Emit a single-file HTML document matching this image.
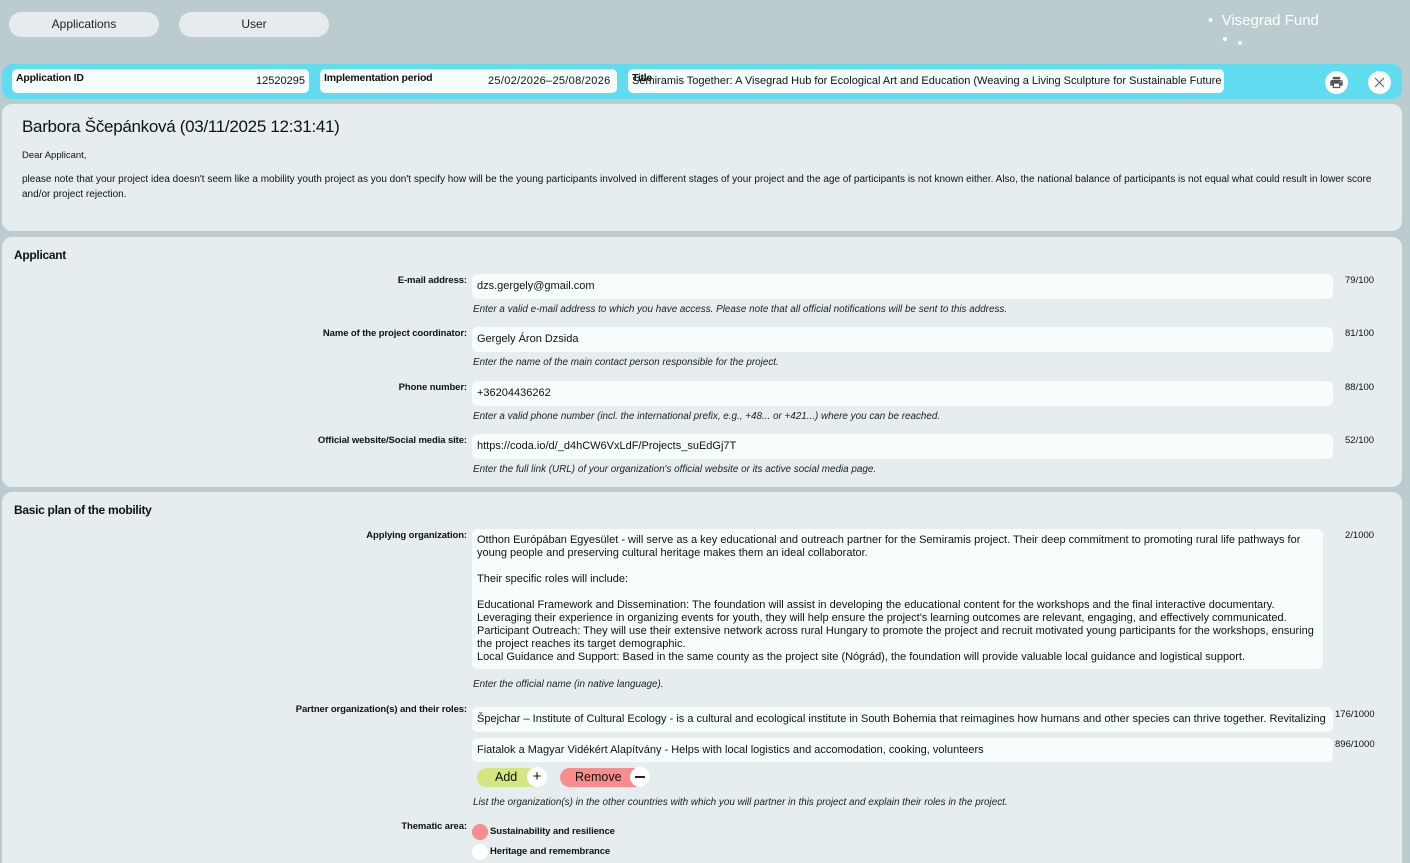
<!DOCTYPE html>
<html style="overflow:hidden"><head><meta charset="utf-8"><style>
*{box-sizing:border-box;margin:0;padding:0}
html,body{width:1410px;height:863px;overflow:hidden}
body{background:#bccbce;font-family:"Liberation Sans",sans-serif;color:#111;position:relative}
.a{position:absolute;white-space:nowrap}
.nav{background:#e6eced;border-radius:13px;height:25px;width:150px;top:12px;font-size:12px;text-align:center;line-height:25px;color:#222}
.panel{position:absolute;left:2px;width:1400px;background:#e6edee;border-radius:10px}
.fld{position:absolute;background:#f7fdfd;border-radius:5px}
.lbl{position:absolute;right:943px;font-size:9.5px;font-weight:bold;letter-spacing:-0.1px;white-space:nowrap}
.inp{position:absolute;left:472px;width:861px;height:25px;background:#f7fdfd;border-radius:6px;font-size:11px;padding:0 5px;line-height:25px;white-space:nowrap;overflow:hidden}
.hint{position:absolute;left:473px;font-size:9.9px;font-style:italic;white-space:nowrap;color:#222}
.cnt{position:absolute;left:1345px;font-size:9.5px;white-space:nowrap}
.ta{font-size:11px;line-height:13px}
</style></head><body>
<div class="a nav" style="left:9px">Applications</div>
<div class="a nav" style="left:179px">User</div>
<div class="a" style="left:1208px;top:12px;color:#fff;font-size:15px">•&nbsp;&nbsp;Visegrad Fund</div>
<div class="a" style="left:1223px;top:37px;width:4px;height:4px;border-radius:50%;background:#fff"></div>
<div class="a" style="left:1238px;top:41px;width:4px;height:4px;border-radius:50%;background:#fff"></div>

<div class="a" style="left:2px;top:64px;width:1400px;height:35px;background:#5fdcef;border-radius:10px"></div>
<div class="fld" style="left:12px;top:69px;width:297px;height:24px"></div>
<div class="a" style="left:16px;top:72px;font-size:10.5px;font-weight:bold;letter-spacing:-0.2px">Application ID</div>
<div class="a" style="left:256px;top:75px;font-size:11px">12520295</div>
<div class="fld" style="left:320px;top:69px;width:297px;height:24px"></div>
<div class="a" style="left:324px;top:72px;font-size:10.5px;font-weight:bold;letter-spacing:-0.2px">Implementation period</div>
<div class="a" style="left:488px;top:75px;font-size:11px;letter-spacing:0.3px">25/02/2026–25/08/2026</div>
<div class="fld" style="left:628px;top:69px;width:596px;height:24px"></div>
<div class="a" style="left:632px;top:72px;font-size:10.5px;font-weight:bold;letter-spacing:-0.3px">Title</div>
<div class="a" style="left:632px;top:75px;font-size:11px">Semiramis Together: A Visegrad Hub for Ecological Art and Education (Weaving a Living Sculpture for Sustainable Future</div>
<div class="a" style="left:1325px;top:71px;width:23px;height:23px;border-radius:50%;background:#fff"></div>
<svg class="a" style="left:1329px;top:75px" width="15" height="15" viewBox="0 0 24 24"><path fill="#555" d="M19 8H5c-1.66 0-3 1.34-3 3v6h4v4h12v-4h4v-6c0-1.66-1.34-3-3-3zm-3 11H8v-5h8v5zm3-7c-.55 0-1-.45-1-1s.45-1 1-1 1 .45 1 1-.45 1-1 1zm-1-9H6v4h12V3z"/></svg>
<div class="a" style="left:1368px;top:71px;width:23px;height:23px;border-radius:50%;background:#fff"></div>
<svg class="a" style="left:1374px;top:77px" width="11" height="11" viewBox="0 0 11 11"><path d="M1 1L10 10M10 1L1 10" stroke="#666" stroke-width="1.2"/></svg>

<div class="panel" style="top:104px;height:127px"></div>
<div class="a" style="left:22px;top:117px;font-size:17px;letter-spacing:-0.3px">Barbora Ščepánková (03/11/2025 12:31:41)</div>
<div class="a" style="left:22px;top:150px;font-size:9.5px">Dear Applicant,</div>
<div class="a" style="left:22px;top:174px;font-size:10px">please note that your project idea doesn't seem like a mobility youth project as you don't specify how will be the young participants involved in different stages of your project and the age of participants is not known either. Also, the national balance of participants is not equal what could result in lower score</div>
<div class="a" style="left:22px;top:189px;font-size:10px">and/or project rejection.</div>

<div class="panel" style="top:237px;height:250px"></div>
<div class="a" style="left:14px;top:248px;font-size:12px;font-weight:bold;letter-spacing:-0.3px">Applicant</div>
<div class="lbl" style="top:275px">E-mail address:</div>
<div class="inp" style="top:274px">dzs.gergely@gmail.com</div>
<div class="hint" style="top:304px">Enter a valid e-mail address to which you have access. Please note that all official notifications will be sent to this address.</div>
<div class="cnt" style="top:275px">79/100</div>
<div class="lbl" style="top:328px">Name of the project coordinator:</div>
<div class="inp" style="top:327px">Gergely Áron Dzsida</div>
<div class="hint" style="top:357px">Enter the name of the main contact person responsible for the project.</div>
<div class="cnt" style="top:328px">81/100</div>
<div class="lbl" style="top:382px">Phone number:</div>
<div class="inp" style="top:381px">+36204436262</div>
<div class="hint" style="top:411px">Enter a valid phone number (incl. the international prefix, e.g., +48... or +421...) where you can be reached.</div>
<div class="cnt" style="top:382px">88/100</div>
<div class="lbl" style="top:435px">Official website/Social media site:</div>
<div class="inp" style="top:434px">https://coda.io/d/_d4hCW6VxLdF/Projects_suEdGj7T</div>
<div class="hint" style="top:464px">Enter the full link (URL) of your organization's official website or its active social media page.</div>
<div class="cnt" style="top:435px">52/100</div>

<div class="panel" style="top:492px;height:371px;border-radius:10px 10px 0 0"></div>
<div class="a" style="left:14px;top:503px;font-size:12px;font-weight:bold;letter-spacing:-0.3px">Basic plan of the mobility</div>
<div class="lbl" style="top:530px">Applying organization:</div>
<div class="fld ta" style="left:472px;top:529px;width:851px;height:140px;padding:5px 5px;border-radius:6px;white-space:pre;overflow:hidden">Otthon Európában Egyesület - will serve as a key educational and outreach partner for the Semiramis project. Their deep commitment to promoting rural life pathways for
young people and preserving cultural heritage makes them an ideal collaborator.

Their specific roles will include:

Educational Framework and Dissemination: The foundation will assist in developing the educational content for the workshops and the final interactive documentary.
Leveraging their experience in organizing events for youth, they will help ensure the project's learning outcomes are relevant, engaging, and effectively communicated.
Participant Outreach: They will use their extensive network across rural Hungary to promote the project and recruit motivated young participants for the workshops, ensuring
the project reaches its target demographic.
Local Guidance and Support: Based in the same county as the project site (Nógrád), the foundation will provide valuable local guidance and logistical support.</div>
<div class="cnt" style="top:530px">2/1000</div>
<div class="hint" style="top:679px">Enter the official name (in native language).</div>
<div class="lbl" style="top:704px">Partner organization(s) and their roles:</div>
<div class="inp" style="top:707px">Špejchar – Institute of Cultural Ecology - is a cultural and ecological institute in South Bohemia that reimagines how humans and other species can thrive together. Revitalizing</div>
<div class="cnt" style="top:709px;left:1335px">176/1000</div>
<div class="inp" style="top:738px;height:24px;line-height:24px">Fiatalok a Magyar Vidékért Alapítvány - Helps with local logistics and accomodation, cooking, volunteers</div>
<div class="cnt" style="top:739px;left:1335px">896/1000</div>
<div class="a" style="left:477px;top:768px;width:70px;height:19px;background:#d4e67f;border-radius:10px;font-size:12.5px;line-height:19px;padding-left:18px">Add</div>
<div class="a" style="left:527px;top:767px;width:20px;height:20px;border-radius:50%;background:#fff;font-size:15px;line-height:19px;text-align:center">+</div>
<div class="a" style="left:560px;top:768px;width:90px;height:19px;background:#f78d8d;border-radius:10px;font-size:12.5px;line-height:19px;padding-left:15px">Remove</div>
<div class="a" style="left:630px;top:767px;width:20px;height:20px;border-radius:50%;background:#fff"></div>
<div class="a" style="left:635px;top:776px;width:10px;height:1.5px;background:#222"></div>
<div class="hint" style="top:797px">List the organization(s) in the other countries with which you will partner in this project and explain their roles in the project.</div>
<div class="lbl" style="top:821px">Thematic area:</div>
<div class="a" style="left:472px;top:824px;width:16px;height:16px;border-radius:50%;background:#f78d8d"></div>
<div class="a" style="left:490px;top:826px;font-size:9.5px;font-weight:bold;letter-spacing:-0.1px">Sustainability and resilience</div>
<div class="a" style="left:472px;top:844px;width:16px;height:16px;border-radius:50%;background:#fff"></div>
<div class="a" style="left:490px;top:846px;font-size:9.5px;font-weight:bold;letter-spacing:-0.1px">Heritage and remembrance</div>
</body></html>
